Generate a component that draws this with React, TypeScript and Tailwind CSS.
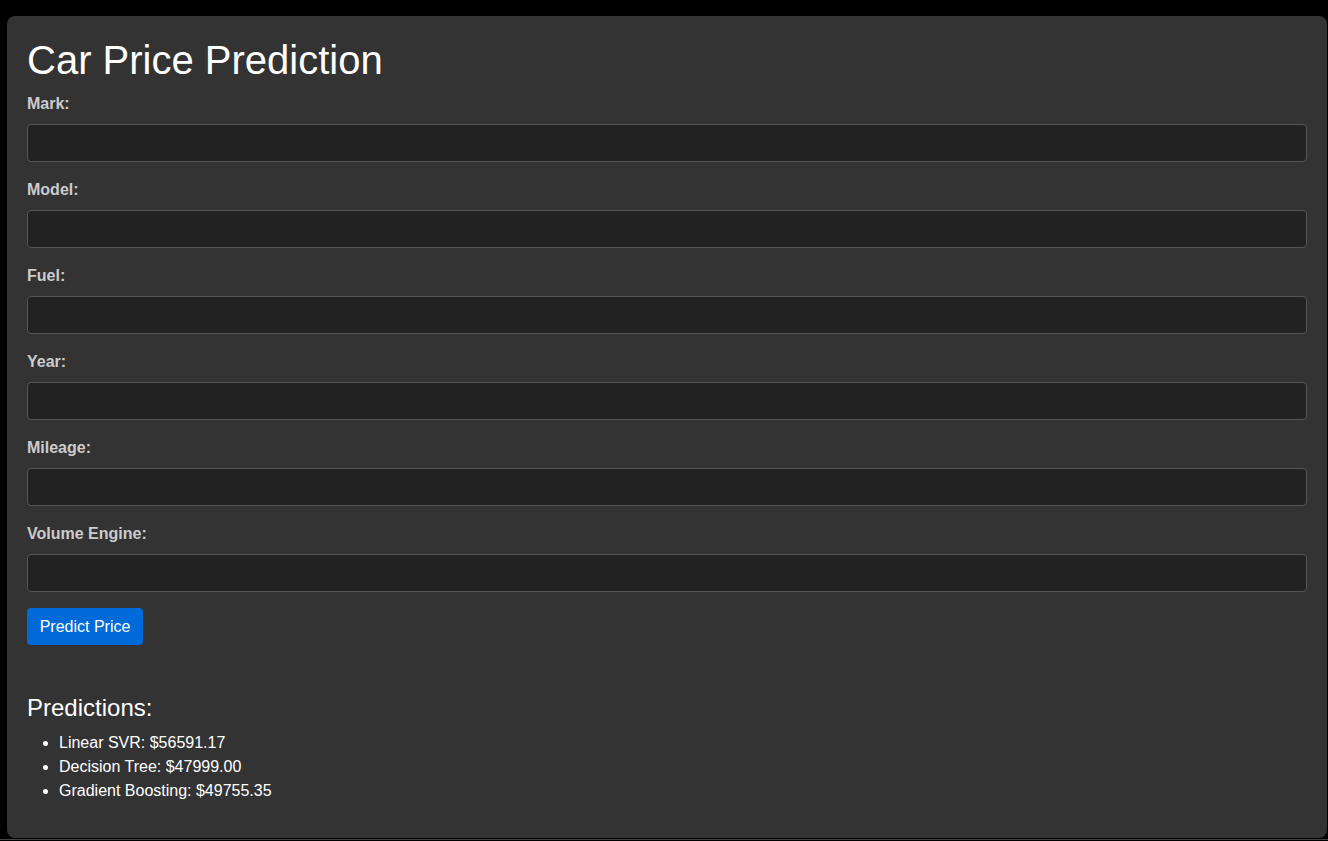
import React from "react";

const fields = ["Mark", "Model", "Fuel", "Year", "Mileage", "Volume Engine"];

export default function App() {
  return (
    <div
      className="w-[1328px] h-[841px] bg-black overflow-hidden pt-[16px] pl-[7px]"
      style={{ fontFamily: '"Liberation Sans", Arial, sans-serif' }}
    >
      <div className="w-[1320px] h-[822px] bg-[#333333] rounded-[8px] px-[20px] pt-[20px]">
        <h1 className="text-[40px] leading-[46px] text-white font-normal mt-[1px] mb-[11px]">
          Car Price Prediction
        </h1>
        <form onSubmit={(e) => e.preventDefault()}>
          {fields.map((f, i) => (
            <div key={f} className={i === fields.length - 1 ? "mb-[16px]" : "mb-[18px]"}>
              <label className="block pt-[1px] text-[16px] leading-[18px] font-bold text-[#cccccc] mb-[11px]">
                {f}:
              </label>
              <input
                type="text"
                className="block w-[1280px] h-[38px] bg-[#222222] border border-[#555555] rounded-[4px] px-[10px] text-[16px] text-white outline-none"
              />
            </div>
          ))}
          <button
            type="submit"
            className="h-[37px] w-[116px] bg-[#006ad9] text-white text-[16px] leading-[18px] rounded-[4px] text-center"
          >
            Predict Price
          </button>
        </form>
        <h3 className="mt-[49px] text-[24px] leading-[28px] text-white font-normal">
          Predictions:
        </h3>
        <ul className="mt-[9px] list-disc pl-[32px] text-[16px] leading-[24px] text-white">
          <li>Linear SVR: $56591.17</li>
          <li>Decision Tree: $47999.00</li>
          <li>Gradient Boosting: $49755.35</li>
        </ul>
      </div>
      <div className="mt-[1px] -ml-[7px] w-[1328px] h-[1px] bg-[#444444]" />
    </div>
  );
}
